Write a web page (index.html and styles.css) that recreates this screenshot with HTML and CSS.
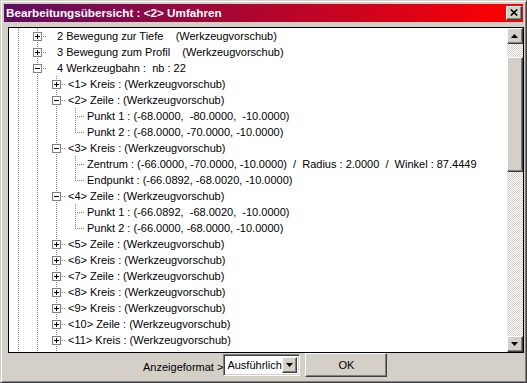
FILE: index.html
```html
<!DOCTYPE html>
<html>
<head>
<meta charset="utf-8">
<link rel="stylesheet" href="styles.css">
</head>
<body>
<div class="win">
  <div class="title">
    <span class="title-text">Bearbeitungsübersicht : &lt;2&gt; Umfahren</span>
    <div class="close raised">
      <svg width="8" height="7" viewBox="0 0 8 7"><path d="M0.8 0.5 L7.2 6.5 M7.2 0.5 L0.8 6.5" stroke="#000" stroke-width="1.6" fill="none"/></svg>
    </div>
  </div>
  <div class="panel">
    <div class="tree">
      <div class="row"><span class="c v"></span><span class="c t"><span class="box plus"></span></span><span class="lbl lead">2 Bewegung zur Tiefe    (Werkzeugvorschub)</span></div>
      <div class="row"><span class="c v"></span><span class="c t"><span class="box plus"></span></span><span class="lbl lead">3 Bewegung zum Profil    (Werkzeugvorschub)</span></div>
      <div class="row"><span class="c v"></span><span class="c t"><span class="box"></span></span><span class="lbl lead">4 Werkzeugbahn :  nb : 22</span></div>
      <div class="row"><span class="c v"></span><span class="c v"></span><span class="c t"><span class="box plus"></span></span><span class="lbl">&lt;1&gt; Kreis : (Werkzeugvorschub)</span></div>
      <div class="row"><span class="c v"></span><span class="c v"></span><span class="c t"><span class="box"></span></span><span class="lbl">&lt;2&gt; Zeile : (Werkzeugvorschub)</span></div>
      <div class="row"><span class="c v"></span><span class="c v"></span><span class="c v"></span><span class="c t"></span><span class="lbl">Punkt 1 : (-68.0000,  -80.0000,  -10.0000)</span></div>
      <div class="row"><span class="c v"></span><span class="c v"></span><span class="c v"></span><span class="c e"></span><span class="lbl">Punkt 2 : (-68.0000, -70.0000, -10.0000)</span></div>
      <div class="row"><span class="c v"></span><span class="c v"></span><span class="c t"><span class="box"></span></span><span class="lbl">&lt;3&gt; Kreis : (Werkzeugvorschub)</span></div>
      <div class="row"><span class="c v"></span><span class="c v"></span><span class="c v"></span><span class="c t"></span><span class="lbl">Zentrum : (-66.0000, -70.0000, -10.0000)  /  Radius : 2.0000  /  Winkel : 87.4449</span></div>
      <div class="row"><span class="c v"></span><span class="c v"></span><span class="c v"></span><span class="c e"></span><span class="lbl">Endpunkt : (-66.0892, -68.0020, -10.0000)</span></div>
      <div class="row"><span class="c v"></span><span class="c v"></span><span class="c t"><span class="box"></span></span><span class="lbl">&lt;4&gt; Zeile : (Werkzeugvorschub)</span></div>
      <div class="row"><span class="c v"></span><span class="c v"></span><span class="c v"></span><span class="c t"></span><span class="lbl">Punkt 1 : (-66.0892,  -68.0020,  -10.0000)</span></div>
      <div class="row"><span class="c v"></span><span class="c v"></span><span class="c v"></span><span class="c e"></span><span class="lbl">Punkt 2 : (-66.0000, -68.0000, -10.0000)</span></div>
      <div class="row"><span class="c v"></span><span class="c v"></span><span class="c t"><span class="box plus"></span></span><span class="lbl">&lt;5&gt; Zeile : (Werkzeugvorschub)</span></div>
      <div class="row"><span class="c v"></span><span class="c v"></span><span class="c t"><span class="box plus"></span></span><span class="lbl">&lt;6&gt; Kreis : (Werkzeugvorschub)</span></div>
      <div class="row"><span class="c v"></span><span class="c v"></span><span class="c t"><span class="box plus"></span></span><span class="lbl">&lt;7&gt; Zeile : (Werkzeugvorschub)</span></div>
      <div class="row"><span class="c v"></span><span class="c v"></span><span class="c t"><span class="box plus"></span></span><span class="lbl">&lt;8&gt; Kreis : (Werkzeugvorschub)</span></div>
      <div class="row"><span class="c v"></span><span class="c v"></span><span class="c t"><span class="box plus"></span></span><span class="lbl">&lt;9&gt; Kreis : (Werkzeugvorschub)</span></div>
      <div class="row"><span class="c v"></span><span class="c v"></span><span class="c t"><span class="box plus"></span></span><span class="lbl">&lt;10&gt; Zeile : (Werkzeugvorschub)</span></div>
      <div class="row"><span class="c v"></span><span class="c v"></span><span class="c t"><span class="box plus"></span></span><span class="lbl">&lt;11&gt; Kreis : (Werkzeugvorschub)</span></div>
      <div class="row"><span class="c v"></span><span class="c v"></span><span class="c v"></span></div>
    </div>
    <div class="sb">
      <div class="sbtn raised"><svg width="7" height="4" viewBox="0 0 7 4"><path d="M3.5 0 L7 4 L0 4 Z" fill="#000"/></svg></div>
      <div class="track"><div class="thumb raised"></div></div>
      <div class="sbtn raised"><svg width="7" height="4" viewBox="0 0 7 4"><path d="M0 0 L7 0 L3.5 4 Z" fill="#000"/></svg></div>
    </div>
  </div>
  <div class="foot">
    <span class="flabel">Anzeigeformat &gt;</span>
    <div class="combo">
      <span class="ctext">Ausführlich</span>
      <div class="cbtn raised"><svg width="7" height="4" viewBox="0 0 7 4"><path d="M0 0 L7 0 L3.5 4 Z" fill="#000"/></svg></div>
    </div>
    <div class="ok raised">OK</div>
  </div>
</div>
</body>
</html>
```
FILE: styles.css
```css
html, body {
  margin: 0;
  padding: 0;
  background: #d4d0c8;
}

.win {
  width: 527px;
  height: 383px;
  box-sizing: border-box;
  border: 1px solid;
  border-color: #d4d0c8 #404040 #404040 #d4d0c8;
  box-shadow: inset 1px 1px #ffffff, inset -1px -1px #808080;
  padding: 3px;
  display: flex;
  flex-direction: column;
  background: #d4d0c8;
  font-family: "Liberation Sans", Arial, sans-serif;
  font-size: 11px;
  color: #000;
}

.title {
  flex: none;
  height: 18px;
  display: flex;
  align-items: center;
  padding-left: 2px;
  background: linear-gradient(90deg, #600c62 0%, #b0062e 50%, #ff0000 100%);
  color: #fff;
}

.title-text {
  font-weight: bold;
  font-size: 11.7px;
  line-height: 18px;
  white-space: nowrap;
}

.raised {
  background: #d4d0c8;
  box-sizing: border-box;
  border: 1px solid;
  border-color: #ffffff #404040 #404040 #ffffff;
  box-shadow: inset -1px -1px #808080;
}

.close {
  margin-left: auto;
  margin-right: 1px;
  width: 16px;
  height: 14px;
  display: flex;
  align-items: center;
  justify-content: center;
  padding: 0 1px 1px 0;
}

.close svg { display: block; }

.panel {
  flex: none;
  height: 326px;
  margin: 5px -1px 0 4px;
  box-sizing: border-box;
  border: 1px solid #000;
  background: #fff;
  display: flex;
}

.tree {
  flex: 1;
  overflow: hidden;
}

.row {
  display: flex;
  height: 16px;
  line-height: 16px;
  white-space: pre;
}

.c {
  flex: none;
  width: 19px;
  height: 16px;
  box-sizing: border-box;
  padding: 4px 0 0 5px;
  background-repeat: no-repeat;
}

.v {
  background-image: repeating-linear-gradient(180deg, #808080 0 1px, transparent 1px 2px);
  background-size: 1px 16px;
  background-position: 9px 0;
}

.t {
  background-image:
    repeating-linear-gradient(180deg, #808080 0 1px, transparent 1px 2px),
    repeating-linear-gradient(90deg, #808080 0 1px, transparent 1px 2px);
  background-size: 1px 16px, 10px 1px;
  background-position: 9px 0, 9px 8px;
}

.e {
  background-image:
    repeating-linear-gradient(180deg, #808080 0 1px, transparent 1px 2px),
    repeating-linear-gradient(90deg, #808080 0 1px, transparent 1px 2px);
  background-size: 1px 9px, 10px 1px;
  background-position: 9px 0, 9px 8px;
}

.box {
  display: block;
  width: 9px;
  height: 9px;
  box-sizing: border-box;
  border: 1px solid #808080;
  background-color: #fff;
  background-image: linear-gradient(#000, #000);
  background-size: 5px 1px;
  background-position: 1px 3px;
  background-repeat: no-repeat;
}

.box.plus {
  background-image: linear-gradient(#000, #000), linear-gradient(#000, #000);
  background-size: 5px 1px, 1px 5px;
  background-position: 1px 3px, 3px 1px;
  background-repeat: no-repeat;
}

.lbl {
  padding-left: 2px;
}

.lbl.lead {
  padding-left: 10px;
}

.sb {
  flex: none;
  width: 16px;
  display: flex;
  flex-direction: column;
}

.sbtn {
  flex: none;
  height: 16px;
  display: flex;
  align-items: center;
  justify-content: center;
  padding: 0 1px 1px 0;
}

.sbtn svg, .cbtn svg { display: block; }

.track {
  flex: 1;
  padding-top: 13px;
  background: repeating-conic-gradient(#d4d0c8 0 25%, #ffffff 0 50%) 0 0 / 2px 2px;
}

.thumb {
  height: 115px;
}

.foot {
  flex: 1;
  display: flex;
  align-items: flex-start;
  padding-left: 139px;
}

.flabel {
  align-self: center;
  white-space: nowrap;
  margin-top: 1px;
}

.combo {
  margin-top: 1px;
  width: 77px;
  height: 22px;
  box-sizing: border-box;
  border: 1px solid;
  border-color: #808080 #ffffff #ffffff #808080;
  box-shadow: inset 1px 1px #404040, inset -1px -1px #d4d0c8;
  background: #fff;
  padding: 2px;
  display: flex;
  align-items: center;
}

.ctext {
  padding-left: 1px;
  white-space: nowrap;
}

.cbtn {
  margin-left: auto;
  width: 16px;
  height: 16px;
  display: flex;
  align-items: center;
  justify-content: center;
  padding: 0 1px 1px 0;
}

.ok {
  margin-left: 5px;
  width: 82px;
  height: 24px;
  display: flex;
  align-items: center;
  justify-content: center;
  padding-bottom: 1px;
}
```
